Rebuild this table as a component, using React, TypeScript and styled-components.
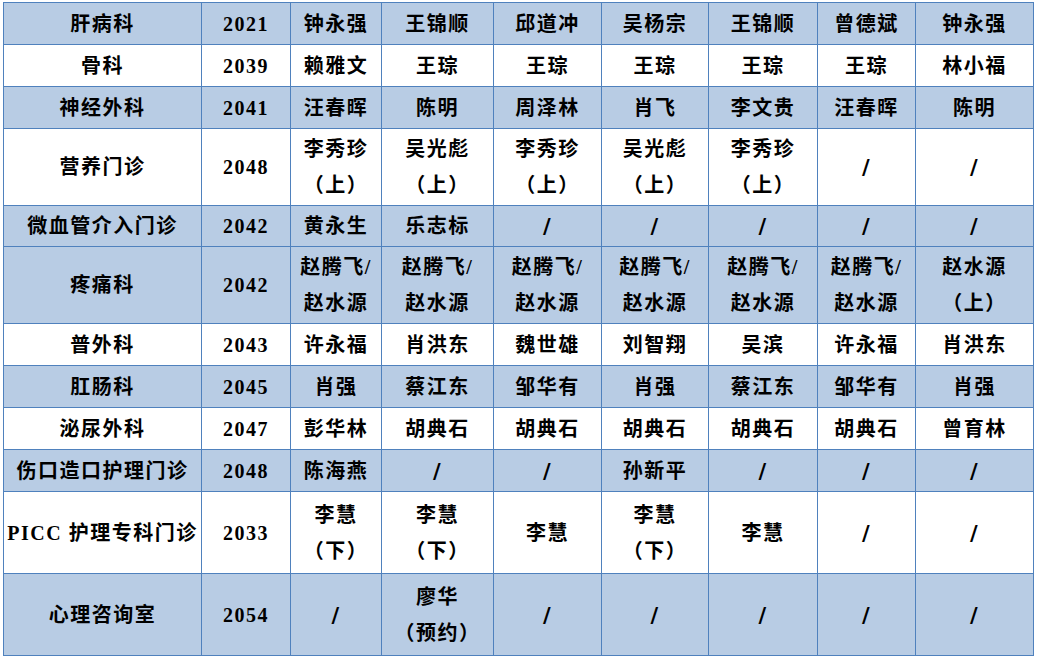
import styled, { createGlobalStyle } from 'styled-components';

const GlobalStyle = createGlobalStyle`
  html, body {
    margin: 0;
    padding: 0;
    background: #ffffff;
  }
`;

const Page = styled.div`
  padding: 2px 0 0 3px;
`;

const Table = styled.table`
  border-collapse: collapse;
  table-layout: fixed;
  width: 1031px;
  font-family: "Liberation Serif", "Noto Sans CJK SC", serif;
  font-weight: 700;
  font-size: 20px;
  color: #000000;
`;

const Row = styled.tr<{ $shaded: boolean; $height: number }>`
  height: ${(p) => p.$height}px;
  background: ${(p) => (p.$shaded ? '#b8cce4' : '#ffffff')};
`;

const Cell = styled.td`
  border: 1px solid #4f81bd;
  padding: 0;
  text-align: center;
  vertical-align: middle;
  letter-spacing: 1.5px;
  line-height: 36px;
  white-space: nowrap;
`;

const Line = styled.div`
  display: block;
`;

const Slash = styled.span`
  font-family: "DejaVu Serif", serif;
  font-size: 21px;
  font-weight: 700;
`;

const widths = [198, 89, 91, 112, 108, 107, 109, 98, 118];

interface RowData {
  dept: string;
  code: string;
  cells: string[];
  shaded: boolean;
  height: number;
}

const rows: RowData[] = [
  { dept: '肝病科', code: '2021', cells: ['钟永强', '王锦顺', '邱道冲', '吴杨宗', '王锦顺', '曾德斌', '钟永强'], shaded: true, height: 42 },
  { dept: '骨科', code: '2039', cells: ['赖雅文', '王琮', '王琮', '王琮', '王琮', '王琮', '林小福'], shaded: false, height: 42 },
  { dept: '神经外科', code: '2041', cells: ['汪春晖', '陈明', '周泽林', '肖飞', '李文贵', '汪春晖', '陈明'], shaded: true, height: 42 },
  { dept: '营养门诊', code: '2048', cells: ['李秀珍|（上）', '吴光彪|（上）', '李秀珍|（上）', '吴光彪|（上）', '李秀珍|（上）', '/', '/'], shaded: false, height: 77 },
  { dept: '微血管介入门诊', code: '2042', cells: ['黄永生', '乐志标', '/', '/', '/', '/', '/'], shaded: true, height: 41 },
  { dept: '疼痛科', code: '2042', cells: ['赵腾飞/|赵水源', '赵腾飞/|赵水源', '赵腾飞/|赵水源', '赵腾飞/|赵水源', '赵腾飞/|赵水源', '赵腾飞/|赵水源', '赵水源|（上）'], shaded: true, height: 77 },
  { dept: '普外科', code: '2043', cells: ['许永福', '肖洪东', '魏世雄', '刘智翔', '吴滨', '许永福', '肖洪东'], shaded: false, height: 42 },
  { dept: '肛肠科', code: '2045', cells: ['肖强', '蔡江东', '邹华有', '肖强', '蔡江东', '邹华有', '肖强'], shaded: true, height: 42 },
  { dept: '泌尿外科', code: '2047', cells: ['彭华林', '胡典石', '胡典石', '胡典石', '胡典石', '胡典石', '曾育林'], shaded: false, height: 42 },
  { dept: '伤口造口护理门诊', code: '2048', cells: ['陈海燕', '/', '/', '孙新平', '/', '/', '/'], shaded: true, height: 42 },
  { dept: 'PICC 护理专科门诊', code: '2033', cells: ['李慧|（下）', '李慧|（下）', '李慧', '李慧|（下）', '李慧', '/', '/'], shaded: false, height: 82 },
  { dept: '心理咨询室', code: '2054', cells: ['/', '廖华|（预约）', '/', '/', '/', '/', '/'], shaded: true, height: 82 },
];

const CellText = ({ text }: { text: string }) =>
  text === '/' ? (
    <Slash>/</Slash>
  ) : (
    <>
      {text.split('|').map((part, i) => (
        <Line key={i}>{part}</Line>
      ))}
    </>
  );

const App = () => (
  <>
    <GlobalStyle />
    <Page>
      <Table>
        <colgroup>
          {widths.map((w, i) => (
            <col key={i} style={{ width: w }} />
          ))}
        </colgroup>
        <tbody>
          {rows.map((r, i) => (
            <Row key={i} $shaded={r.shaded} $height={r.height}>
              <Cell>{r.dept}</Cell>
              <Cell>{r.code}</Cell>
              {r.cells.map((c, j) => (
                <Cell key={j}>
                  <CellText text={c} />
                </Cell>
              ))}
            </Row>
          ))}
        </tbody>
      </Table>
    </Page>
  </>
);

export default App;
